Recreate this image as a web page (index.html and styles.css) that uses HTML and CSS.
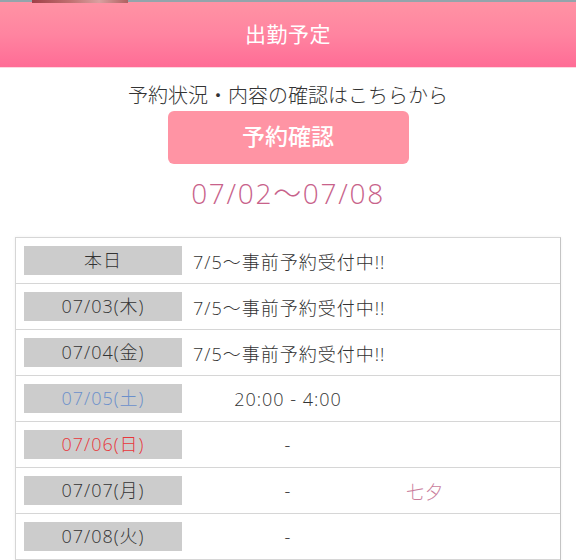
FILE: index.html
```html
<!DOCTYPE html>
<html lang="ja">
<head>
<meta charset="utf-8">
<link rel="stylesheet" href="styles.css">
</head>
<body>
<div class="topstrip"><span class="topimg"></span></div>
<header class="head">出勤予定</header>
<main class="content">
  <p class="note">予約状況・内容の確認はこちらから</p>
  <a class="btn">予約確認</a>
  <p class="range">07/02〜07/08</p>
  <div class="schedule">
    <div class="row"><div class="label">本日</div><div class="wide">7/5〜事前予約受付中!!</div></div>
    <div class="row"><div class="label">07/03(木)</div><div class="wide">7/5〜事前予約受付中!!</div></div>
    <div class="row"><div class="label">07/04(金)</div><div class="wide">7/5〜事前予約受付中!!</div></div>
    <div class="row"><div class="label sat">07/05(土)</div><div class="time">20:00 - 4:00</div><div class="memo"></div></div>
    <div class="row"><div class="label sun">07/06(日)</div><div class="time">-</div><div class="memo"></div></div>
    <div class="row"><div class="label">07/07(月)</div><div class="time">-</div><div class="memo">七夕</div></div>
    <div class="row"><div class="label">07/08(火)</div><div class="time">-</div><div class="memo"></div></div>
  </div>
</main>
</body>
</html>
```
FILE: styles.css
```css
html, body {
  margin: 0;
  padding: 0;
  background: #ffffff;
  font-family: "Open Sans", "Noto Sans CJK JP", sans-serif;
  font-weight: 300;
  color: #333333;
}
.topstrip {
  height: 2px;
  background: #93a4ab;
  position: relative;
}
.topimg {
  position: absolute;
  left: 32px;
  top: 0;
  width: 96px;
  height: 3px;
  background: linear-gradient(90deg, #a04048, #c07070 40%, #d9a0a0 70%, #b06060);
}
.head {
  height: 65px;
  line-height: 65px;
  text-align: center;
  color: #ffffff;
  font-size: 21px;
  font-weight: 400;
  letter-spacing: 0.5px;
  background: linear-gradient(180deg, #ff93a4 0%, #ff84a0 50%, #ff6c96 100%);
  border-bottom: 1px solid #ffd6e0;
}
.content {
  display: flex;
  flex-direction: column;
  align-items: center;
}
.note {
  margin: 14px 0 0;
  font-size: 20px;
  line-height: 28px;
  color: #333333;
}
.btn {
  display: block;
  box-sizing: border-box;
  width: 241px;
  height: 53px;
  line-height: 51px;
  margin-top: 1px;
  text-align: center;
  background: #ff94a4;
  color: #ffffff;
  font-size: 23px;
  font-weight: 500;
  border-radius: 6px;
}
.range {
  margin: 9px 0 0;
  font-size: 28px;
  line-height: 40px;
  letter-spacing: 1.7px;
  color: #c8628a;
  font-weight: 300;
}
.schedule {
  align-self: stretch;
  margin: 24px 15px 0 15px;
  border: 1px solid #d6d6d6;
  border-right-color: #c4c4c4;
  border-bottom: none;
  box-shadow: 0 0 3px rgba(0, 0, 0, 0.06);
}
.row {
  display: flex;
  align-items: center;
  height: 45px;
  border-bottom: 1px solid #d6d6d6;
  font-size: 18px;
  letter-spacing: 1px;
}
.label {
  flex: 0 0 158px;
  height: 29px;
  line-height: 29px;
  margin-left: 8px;
  background: #cccccc;
  text-align: center;
  color: #333333;
}
.label.sat { color: #6a8fcb; }
.label.sun { color: #e8363a; }
.wide {
  margin-left: 11px;
}
.time {
  flex: 0 0 190px;
  margin-left: 11px;
  text-align: center;
}
.memo {
  flex: 0 0 84px;
  text-align: center;
  color: #c97d9c;
}
```
